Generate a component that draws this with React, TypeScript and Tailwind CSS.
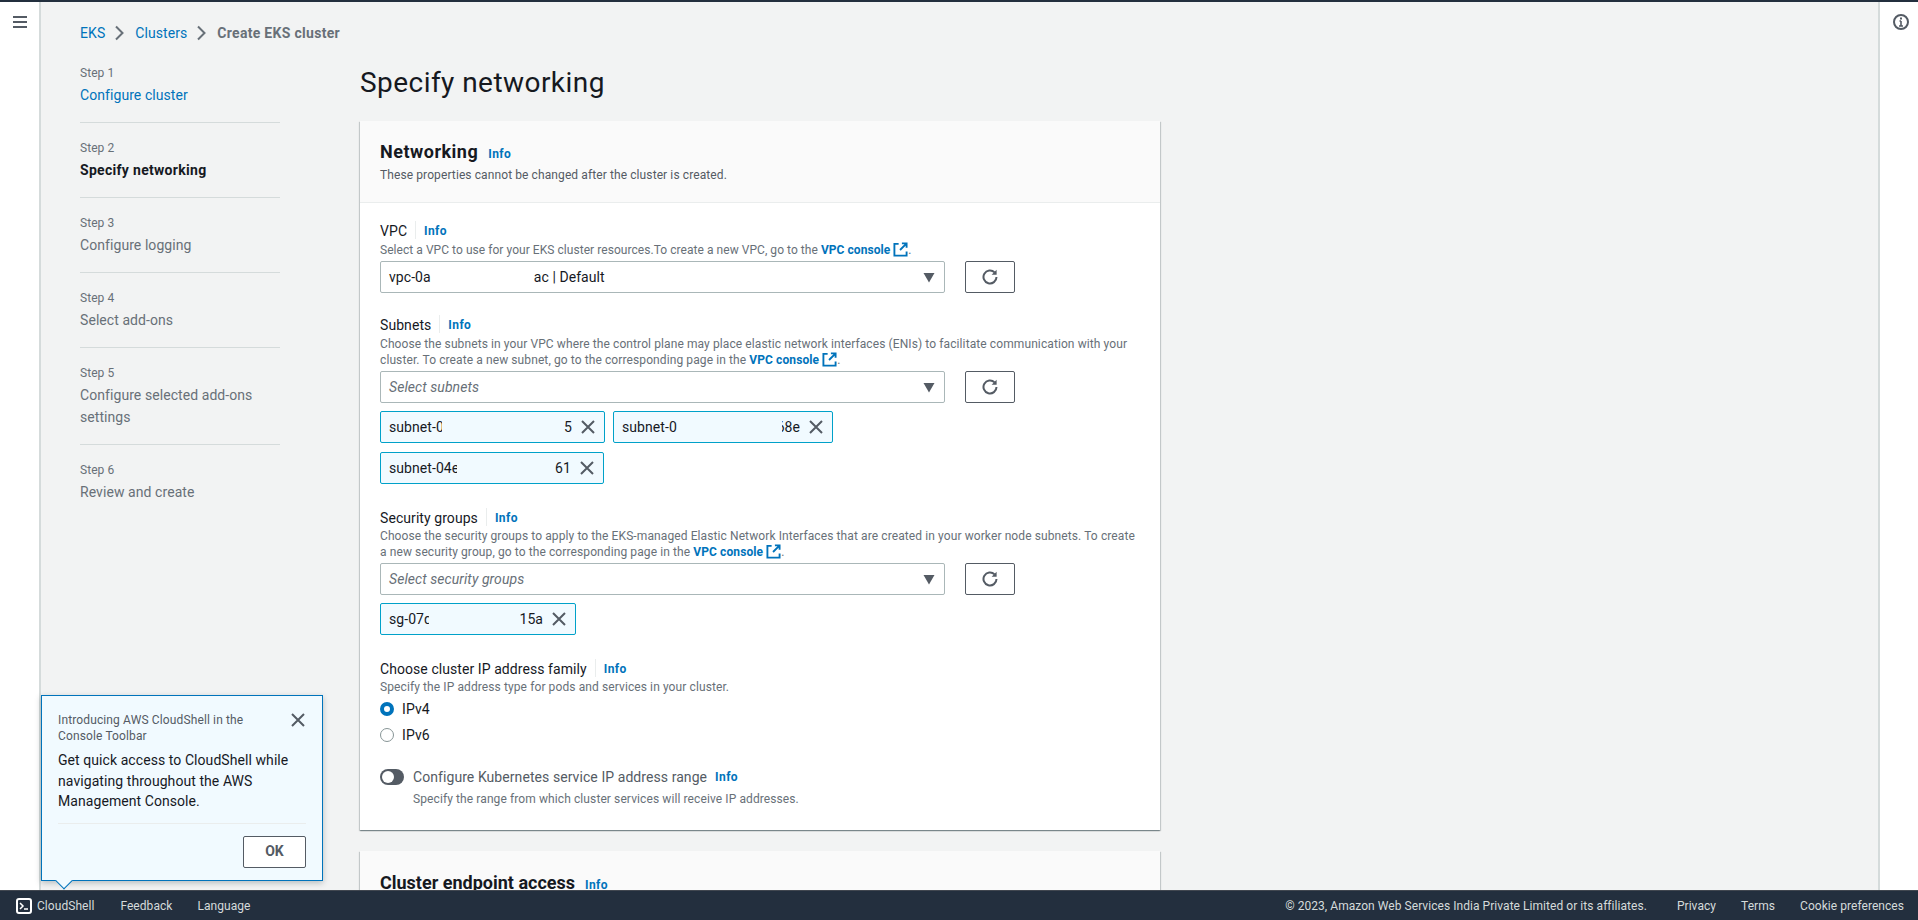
import type { ReactNode } from "react"

const font = { fontFamily: 'Roboto, "Noto Sans", sans-serif' }

const descText = "text-[12px] leading-[16px] text-[#687078] tracking-[0.1px]"

function Chevron() {
  return (
    <svg viewBox="0 0 16 16" className="w-[16px] h-[16px] mx-[7px] shrink-0" fill="none" stroke="#687078" strokeWidth="2">
      <path d="M4 1.5 10.5 8 4 14.5" />
    </svg>
  )
}

function Step({ n, title, state, last }: { n: number; title: ReactNode; state?: "link" | "active"; last?: boolean }) {
  const color =
    state === "link"
      ? "text-[#0073bb]"
      : state === "active"
        ? "text-[#16191f] font-bold tracking-[0.3px]"
        : "text-[#687078]"
  return (
    <div className={last ? "pb-[16px]" : "pb-[16px] mb-[17px] border-b border-[#d5dbdb]"}>
      <div className="text-[12px] leading-[16px] text-[#687078]">Step {n}</div>
      <div className={`mt-[3px] text-[14px] leading-[22px] ${color}`}>{title}</div>
    </div>
  )
}

function Info({ className = "" }: { className?: string }) {
  return <span className={`text-[12px] font-bold tracking-[0.4px] text-[#0073bb] ${className}`}>Info</span>
}

function FieldLabel({ children, className = "" }: { children: ReactNode; className?: string }) {
  return (
    <div className={`flex items-center h-[20px] text-[14px] leading-[20px] text-[#16191f] ${className}`}>
      <span className="pt-[1px]">{children}</span>
      <span className="ml-[8px] mr-[8px] h-[18px] border-l border-[#eaeded]" />
      <Info className="pt-[1px]" />
    </div>
  )
}

function ExternalIcon() {
  return (
    <svg viewBox="0 0 16 16" className="inline-block w-[15px] h-[15px] ml-[3px] align-[-3px]" fill="none" stroke="#0073bb" strokeWidth="2">
      <path d="M6 2H1.5v12.5H14.5V10" />
      <path d="M14 2 7.5 8.5M9.5 1.5h5V6" />
    </svg>
  )
}

function VpcLink() {
  return (
    <>
      <span className="font-bold text-[#0073bb]">VPC console</span>
      <ExternalIcon />.
    </>
  )
}

function SelectRow({ children, italic }: { children: ReactNode; italic?: boolean }) {
  return (
    <div className="flex mt-[3px] gap-[20px]">
      <div
        className={`flex items-center justify-between w-[565px] h-[32px] px-[8px] bg-white border border-[#aab7b8] rounded-[2px] text-[14px] ${
          italic ? "italic text-[#687078]" : "text-[#16191f]"
        }`}
      >
        <span className="whitespace-pre">{children}</span>
        <svg viewBox="0 0 12 12" className="w-[12px] h-[12px] mr-[1px]" fill="#545b64">
          <path d="M0.5 2h11L6 11.5z" />
        </svg>
      </div>
      <div className="flex items-center justify-center w-[50px] h-[32px] bg-white border border-[#545b64] rounded-[2px]">
        <svg viewBox="0 0 16 16" className="w-[16px] h-[16px]" fill="none" stroke="#545b64" strokeWidth="2">
          <path d="M12.6 3.4A6.5 6.5 0 1 0 14.5 8" />
          <path d="M14.6 0.8v5H9.6z" fill="#545b64" stroke="none" />
        </svg>
      </div>
    </div>
  )
}

function CloseIcon({ className = "" }: { className?: string }) {
  return (
    <svg viewBox="0 0 16 16" className={`w-[16px] h-[16px] shrink-0 ${className}`} fill="none" stroke="#545b64" strokeWidth="2">
      <path d="M2 2l12 12M14 2 2 14" />
    </svg>
  )
}

function Token({
  left,
  leftWidth,
  right,
  rightClip = "",
  width,
}: {
  left: string
  leftWidth: string
  right: string
  rightClip?: string
  width: string
}) {
  return (
    <div className={`flex items-center justify-between h-[32px] pl-[8px] pr-[8px] bg-[#f1faff] border border-[#00a1c9] rounded-[2px] text-[14px] text-[#16191f] ${width}`}>
      <span className={`overflow-hidden whitespace-nowrap pt-[1px] ${leftWidth}`}>{left}</span>
      <span className={`flex justify-end overflow-hidden ml-auto mr-[8px] whitespace-nowrap pt-[1px] ${rightClip}`}>{right}</span>
      <CloseIcon />
    </div>
  )
}

function Radio({ label, checked }: { label: string; checked?: boolean }) {
  return (
    <div className="flex items-center h-[20px] text-[14px] text-[#16191f]">
      <span
        className={
          checked
            ? "w-[14px] h-[14px] rounded-full border-[4px] border-[#0073bb] bg-white"
            : "w-[14px] h-[14px] rounded-full border border-[#879596] bg-white"
        }
      />
      <span className="ml-[8px]">{label}</span>
    </div>
  )
}

const cardShadow = "shadow-[0_1px_1px_0_rgba(0,28,36,0.3),1px_1px_1px_0_rgba(0,28,36,0.15),-1px_1px_1px_0_rgba(0,28,36,0.15)]"

export default function App() {
  return (
    <div style={font} className="relative flex flex-col w-[1918px] h-[920px] overflow-hidden bg-[#f2f3f3] tracking-[0.07px]">
      <div className="h-[2px] shrink-0 bg-[#232f3e]" />

      <div className="flex flex-1 min-h-0">
        {/* left nav rail */}
        <div className="w-[41px] shrink-0 bg-white border-r-2 border-[#d5dbdb] pt-[14px] pl-[13px]">
          <div className="flex flex-col gap-[3px] w-[14px]">
            <div className="h-[2px] bg-[#545b64]" />
            <div className="h-[2px] bg-[#545b64]" />
            <div className="h-[2px] bg-[#545b64]" />
          </div>
        </div>

        <div className="flex-1 min-w-0 pl-[39px]">
          <div className="flex items-center h-[20px] mt-[21px] mb-[21px] text-[14px] text-[#0073bb]">
            <span>EKS</span>
            <Chevron />
            <span>Clusters</span>
            <Chevron />
            <span className="font-bold text-[#687078] tracking-[0.3px]">Create EKS cluster</span>
          </div>

          <div className="flex">
            <div className="w-[200px] shrink-0 pt-[1px]">
              <Step n={1} title="Configure cluster" state="link" />
              <Step n={2} title="Specify networking" state="active" />
              <Step n={3} title="Configure logging" />
              <Step n={4} title="Select add-ons" />
              <Step n={5} title={<>Configure selected add-ons<br />settings</>} />
              <Step n={6} title="Review and create" last />
            </div>

            <div className="w-[800px] ml-[80px] shrink-0">
              <h1 className="pt-[1px] text-[28px] leading-[36px] tracking-[0.45px] text-[#16191f]">Specify networking</h1>

              <div className={`mt-[20px] bg-white ${cardShadow}`}>
                <div className="px-[20px] pt-[20px] pb-[19px] bg-[#fafafa] border-b border-[#eaeded]">
                  <div className="flex items-baseline h-[22px]">
                    <span className="text-[18px] font-bold leading-[22px] tracking-[0.5px] text-[#16191f]">Networking</span>
                    <Info className="ml-[10px]" />
                  </div>
                  <div className="mt-[4px] text-[12px] leading-[16px] text-[#545b64] tracking-[0.1px]">
                    These properties cannot be changed after the cluster is created.
                  </div>
                </div>

                <div className="px-[20px] pt-[17px] pb-[23px]">
                  <FieldLabel>VPC</FieldLabel>
                  <div className="mt-[2px] text-[12px] leading-[16px] text-[#687078] tracking-[0.05px]">
                    Select a VPC to use for your EKS cluster resources.To create a new VPC, go to the <VpcLink />
                  </div>
                  <SelectRow>
                    vpc-0a
                    <span className="inline-block w-[103px]" />
                    ac | Default
                  </SelectRow>

                  <FieldLabel className="mt-[21px]">Subnets</FieldLabel>
                  <div className={`mt-[2px] ${descText}`}>
                    Choose the subnets in your VPC where the control plane may place elastic network interfaces (ENIs) to facilitate communication with your
                    <br />
                    cluster. To create a new subnet, go to the corresponding page in the <VpcLink />
                  </div>
                  <SelectRow italic>Select subnets</SelectRow>
                  <div className="flex flex-wrap w-[565px] mt-[8px] gap-x-[8px] gap-y-[9px]">
                    <Token left="subnet-0" leftWidth="w-[53px]" right="5" width="w-[225px]" />
                    <Token left="subnet-0" leftWidth="w-[55px]" right="68e" rightClip="w-[18px]" width="w-[220px]" />
                    <Token left="subnet-04e" leftWidth="w-[68px]" right="61" width="w-[224px]" />
                  </div>

                  <FieldLabel className="mt-[23px]">Security groups</FieldLabel>
                  <div className={`mt-[1px] ${descText}`}>
                    Choose the security groups to apply to the EKS-managed Elastic Network Interfaces that are created in your worker node subnets. To create
                    <br />
                    a new security group, go to the corresponding page in the <VpcLink />
                  </div>
                  <SelectRow italic>Select security groups</SelectRow>
                  <div className="mt-[8px]">
                    <Token left="sg-07d" leftWidth="w-[40px]" right="15a" width="w-[196px]" />
                  </div>

                  <FieldLabel className="mt-[23px]">Choose cluster IP address family</FieldLabel>
                  <div className={`mt-[1px] ${descText}`}>
                    Specify the IP address type for pods and services in your cluster.
                  </div>
                  <div className="mt-[4px] flex flex-col gap-[6px]">
                    <Radio label="IPv4" checked />
                    <Radio label="IPv6" />
                  </div>

                  <div className="mt-[22px] flex items-center h-[20px]">
                    <span className="flex items-center w-[24px] h-[16px] pl-[2px] rounded-full bg-[#545b64]">
                      <span className="w-[12px] h-[12px] rounded-full bg-white" />
                    </span>
                    <span className="ml-[9px] text-[14px] text-[#545b64]">Configure Kubernetes service IP address range</span>
                    <Info className="ml-[8px]" />
                  </div>
                  <div className={`mt-[4px] ml-[33px] ${descText}`}>
                    Specify the range from which cluster services will receive IP addresses.
                  </div>
                </div>
              </div>

              <div className={`mt-[21px] bg-[#fafafa] pt-[21px] px-[20px] pb-[20px] ${cardShadow}`}>
                <div className="flex items-baseline h-[22px]">
                  <span className="text-[18px] font-bold leading-[22px] tracking-[0px] text-[#16191f]">Cluster endpoint access</span>
                  <Info className="ml-[10px]" />
                </div>
              </div>
            </div>
          </div>
        </div>

        {/* right tools rail */}
        <div className="w-[40px] shrink-0 bg-white border-l-2 border-[#d5dbdb] pt-[12px] pl-[13px]">
          <svg viewBox="0 0 16 16" className="w-[16px] h-[16px]" fill="none" stroke="#545b64" strokeWidth="2">
            <circle cx="8" cy="8" r="7" />
            <path d="M8 7v5M6 12h4M6.5 7H8" strokeWidth="1.6" />
            <path d="M8 3.5v2" />
          </svg>
        </div>
      </div>

      {/* footer */}
      <div className="flex items-center h-[30px] shrink-0 bg-[#232f3e] border-t border-[#414750] text-[12px] text-[#d5dbdb] tracking-[0.05px]">
        <svg viewBox="0 0 16 16" className="ml-[16px] w-[16px] h-[16px]" fill="none">
          <rect x="1" y="1" width="14" height="14" rx="2" stroke="#ffffff" strokeWidth="2" />
          <path d="M4 5l3 3-3 3M8 11h4" stroke="#ffffff" strokeWidth="1.5" />
        </svg>
        <span className="ml-[5px]">CloudShell</span>
        <span className="ml-[26px]">Feedback</span>
        <span className="ml-[25px]">Language</span>
        <span className="ml-auto">© 2023, Amazon Web Services India Private Limited or its affiliates.</span>
        <span className="ml-[30px]">Privacy</span>
        <span className="ml-[25px]">Terms</span>
        <span className="ml-[25px] mr-[14px]">Cookie preferences</span>
      </div>

      {/* cloudshell popover */}
      <div className="absolute left-[41px] top-[695px] w-[282px] h-[186px] bg-[#f1faff] border border-[#0073bb] shadow-[0_2px_6px_rgba(0,28,36,0.25)] px-[16px] pt-[16px]">
        <div className="flex justify-between">
          <div className="w-[210px] text-[12px] leading-[16px] text-[#545b64] tracking-[0.13px]">
            Introducing AWS CloudShell in the Console Toolbar
          </div>
          <CloseIcon />
        </div>
        <div className="mt-[6px] text-[14px] leading-[20.5px] text-[#16191f]">
          Get quick access to CloudShell while navigating throughout the AWS Management Console.
        </div>
        <div className="mt-[11px] pt-[12px] border-t border-[#eaeded] flex justify-end">
          <div className="flex items-center justify-center w-[63px] h-[32px] bg-white border border-[#545b64] rounded-[2px] text-[14px] font-bold text-[#545b64]">
            OK
          </div>
        </div>
        <div className="absolute left-[16px] bottom-[-7px] w-[12px] h-[12px] rotate-45 bg-[#f1faff] border-r border-b border-[#0073bb]" />
      </div>
    </div>
  )
}
